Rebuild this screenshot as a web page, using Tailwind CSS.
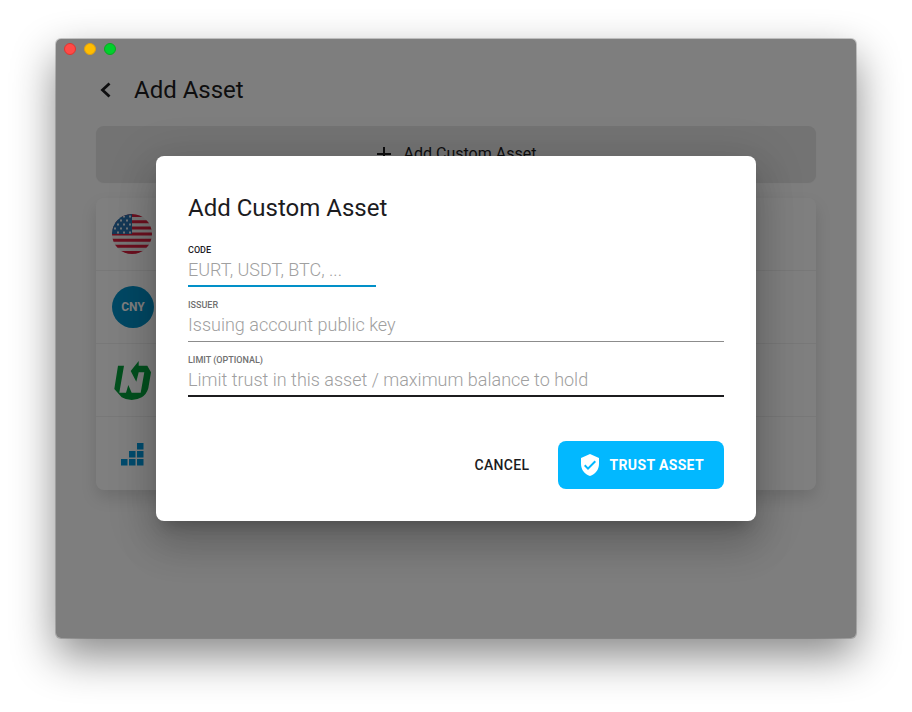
<!DOCTYPE html>
<html lang="en">
<head>
<meta charset="utf-8">
<meta name="viewport" content="width=device-width, initial-scale=1">
<title>Add Asset</title>
<script src="https://cdn.jsdelivr.net/npm/@tailwindcss/browser@4"></script>
</head>
<body class="flex min-h-screen flex-col bg-white px-14 pt-[39px] pb-[74px] font-[Roboto,sans-serif] text-[#1c1c1e]">
  <div class="relative flex-1 overflow-visible rounded-[5px] bg-[#fcfcfc] shadow-[0_0_0_1px_#00000030,0_18px_44px_#00000078]">
    <main class="px-10 pt-[31px]">
      <header class="flex h-10 items-center">
        <button class="flex h-10 w-[38px] items-center" aria-label="Back">
          <svg class="size-5" viewBox="0 0 20 20" fill="none" stroke="currentColor" stroke-width="2.8"><path d="M13.500 3.500 6.500 10l7 6.500"/></svg>
        </button>
        <h1 class="text-2xl">Add Asset</h1>
      </header>
      <button class="mt-4 flex h-14 w-full items-center justify-center gap-3 rounded-lg bg-[#e6e6e6] text-base shadow-[0_1px_1px_#00000018]">
        <svg class="size-4" viewBox="0 0 16 16" fill="none" stroke="currentColor" stroke-width="2"><path d="M8 1v14M1 8h14"/></svg>
        Add Custom Asset
      </button>
      <ul class="mt-4 divide-y divide-[#f0f0f0] rounded-lg bg-white shadow-[0_8px_16px_#00000020]">
        <li class="flex h-[73px] items-center px-4">
          <svg class="size-10" viewBox="0 0 40 40" role="img" aria-label="USD">
            <defs><clipPath id="disc"><circle cx="20" cy="20" r="20"/></clipPath></defs>
            <g clip-path="url(#disc)">
              <path fill="#eee" d="M0 0h40v40H0z"/>
              <path stroke="#d8203f" stroke-width="3" d="M0 1.500h40M0 7.700h40M0 13.900h40M0 20h40M0 26.200h40M0 32.300h40M0 38.500h40"/>
              <path fill="#2a70ac" d="M0 0h20v20H0z"/>
              <path stroke="#dde6ee" stroke-width="2" stroke-dasharray="2 4" d="M11 2.500h9M8 6.500h12M5 10.500h15M2 14.500h18M5 18.500h15"/>
            </g>
          </svg>
        </li>
        <li class="flex h-[73px] items-center px-4">
          <span class="flex size-[42px] items-center justify-center rounded-full bg-[#0290c8] text-xs font-bold text-white">CNY</span>
        </li>
        <li class="flex h-[73px] items-center px-4">
          <svg class="size-10" viewBox="0 0 40 40" role="img" aria-label="NGNT"><path fill="#07a03c" d="M6 5.700H12L7.300 32.700H14L16.300 25 19.700 32.700H28.700L32.300 12.300H26.700L24.300 21.700 18.700 11 26.700 1V5.700H35.300L39 12.300 36.300 28.300Q34.500 34.500 29.700 37.300 25 40 19.700 40 14 40 9.700 37.300L2.300 29Z"/></svg>
        </li>
        <li class="flex h-[73px] items-center px-4">
          <svg class="size-10" viewBox="0 0 40 40" fill="#0099dd" role="img" aria-label="Chart"><path d="M9 25h6.500v6.500H9zM17 25h6.500v6.500H17zM25 25h6.500v6.500H25zM17 17h6.500v6.500H17zM25 17h6.500v6.500H25zM25 9h6.500v6.500H25z"/></svg>
        </li>
      </ul>
    </main>

    <div class="absolute inset-0 flex items-center justify-center overflow-hidden rounded-[5px] bg-black/50">
      <form role="dialog" aria-labelledby="dialog-title" class="w-3/4 rounded-lg bg-white px-8 pt-9 pb-8 shadow-[0_11px_15px_-7px_#00000033,0_24px_38px_3px_#00000024,0_9px_46px_8px_#0000001f]">
        <h2 id="dialog-title" class="mb-5 text-2xl">Add Custom Asset</h2>
        <div class="flex flex-col gap-3">
          <div class="flex flex-col">
            <label for="code" class="text-[9px] leading-3 font-medium">CODE</label>
            <input id="code" class="h-[31px] w-[35%] border-b-2 border-[#0290c8] pb-0.5 text-lg font-light outline-none placeholder:text-[#a0a0a0]" placeholder="EURT, USDT, BTC, ...">
          </div>
          <div class="flex flex-col">
            <label for="issuer" class="text-[9px] leading-3 font-medium text-[#707070]">ISSUER</label>
            <input id="issuer" class="h-[31px] border-b border-[#8c8c8c] pb-[3px] text-lg font-light outline-none placeholder:text-[#a0a0a0]" placeholder="Issuing account public key">
          </div>
          <div class="flex flex-col">
            <label for="limit" class="text-[9px] leading-3 font-medium text-[#707070]">LIMIT (OPTIONAL)</label>
            <input id="limit" class="h-[31px] border-b-2 border-[#1c1c1e] pb-0.5 text-lg font-light outline-none placeholder:text-[#a0a0a0]" placeholder="Limit trust in this asset / maximum balance to hold">
          </div>
        </div>
        <div class="mt-11 flex justify-end gap-2">
          <button type="button" class="h-12 px-5 text-sm font-medium tracking-wide">CANCEL</button>
          <button type="submit" class="flex h-12 items-center gap-2 rounded-lg bg-[#02b8ff] px-5 text-sm font-bold tracking-wide text-white">
            <svg class="size-6" viewBox="0 0 24 24" fill="currentColor" aria-hidden="true"><path d="M12 1 3 5v6c0 5.550 3.840 10.740 9 12 5.160-1.260 9-6.450 9-12V5zm-2 16-4-4 1.410-1.410L10 14.170l6.590-6.590L18 9z"/></svg>
            TRUST ASSET
          </button>
        </div>
      </form>
    </div>

    <div class="absolute top-1 left-2 flex gap-2">
      <button class="size-3 rounded-full border border-[#e0342f] bg-[#ff4a47]" aria-label="Close"></button>
      <button class="size-3 rounded-full border border-[#e0a010] bg-[#ffbd00]" aria-label="Minimize"></button>
      <button class="size-3 rounded-full border border-[#0aa820] bg-[#00d02c]" aria-label="Zoom"></button>
    </div>
  </div>
</body>
</html>
